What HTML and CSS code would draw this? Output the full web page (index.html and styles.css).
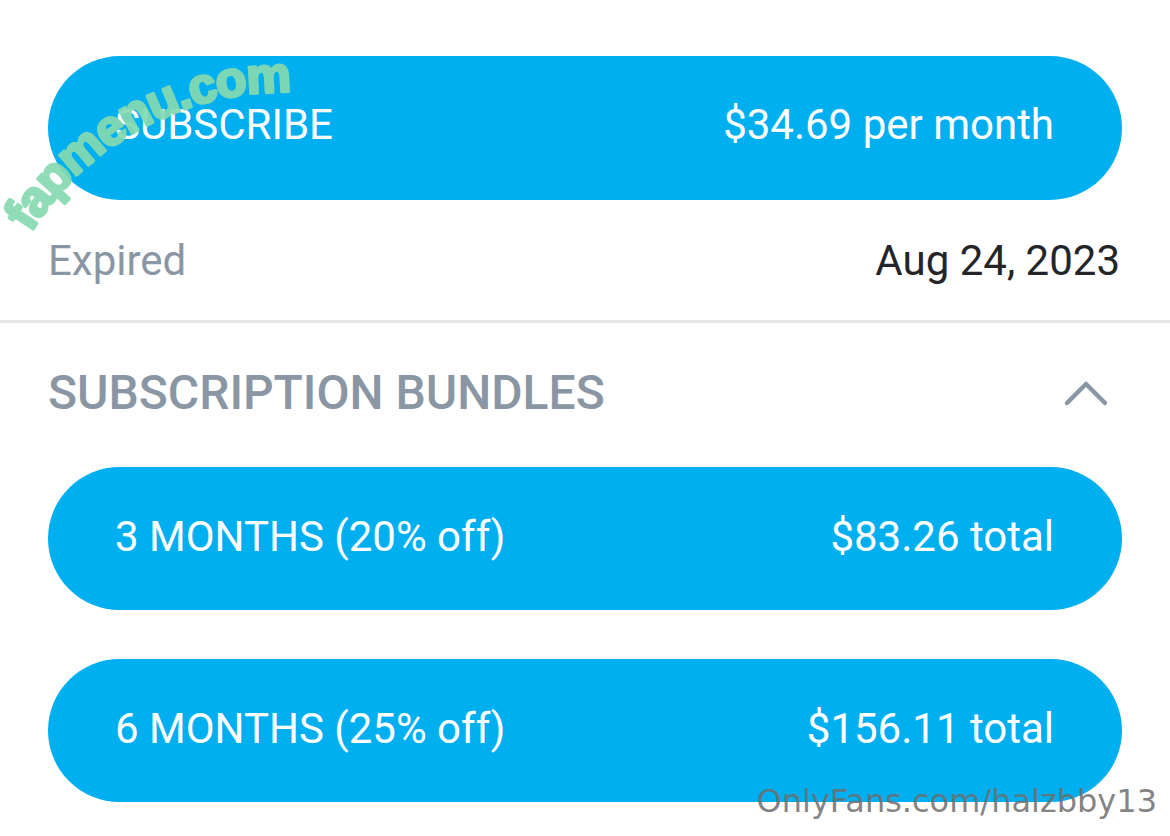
FILE: index.html
```html
<!DOCTYPE html>
<html lang="en">

<head>
  <meta charset="utf-8">
  <meta name="viewport" content="width=device-width, initial-scale=1">
  <title>Subscription</title>

  <link rel="stylesheet" href="styles.css">
</head>

<body>
  <div class="page">
    <section class="plan">
      <button class="btn" type="button">
        <span>SUBSCRIBE</span>
        <span>$34.69 per month</span>
      </button>
      <div class="status">
        <span class="status-label">Expired</span>
        <span class="status-date">Aug 24, 2023</span>
      </div>
    </section>

    <section class="bundles">
      <div class="bundles-head">
        <h2>SUBSCRIPTION BUNDLES</h2>
        <svg class="chevron" width="46" height="28" viewBox="0 0 46 28">
          <polyline points="4,24 23,5 42,24" fill="none" stroke="#8a96a3" stroke-width="4.5" stroke-linecap="round" stroke-linejoin="round" />
        </svg>
      </div>
      <div class="bundle-list">
        <button class="btn" type="button">
          <span>3 MONTHS (20% off)</span>
          <span>$83.26 total</span>
        </button>
        <button class="btn" type="button">
          <span>6 MONTHS (25% off)</span>
          <span>$156.11 total</span>
        </button>
      </div>
    </section>

    <!-- watermarks -->
    <svg class="mark-site" width="400" height="260" viewBox="0 0 400 260">
      <path id="mark-arc" d="M 30.6 233 A 300 300 0 0 1 387.6 110.1" fill="none" />
      <text><textPath href="#mark-arc">fapmenu.com</textPath></text>
    </svg>
    <span class="mark-user">OnlyFans.com/halzbby13</span>
  </div>
</body>

</html>
```

FILE: styles.css
```css
body {
  margin: 0;
  background: #fff;
  font-family: Roboto, "Noto Sans", sans-serif;
}

.page {
  position: relative;
  height: 836px;
  overflow: hidden;
}

.plan {
  padding: 56px 48px 0;
  border-bottom: 3px solid #e6e6e6;
}

.btn {
  display: flex;
  justify-content: space-between;
  align-items: center;
  width: 100%;
  height: 144px;
  box-sizing: border-box;
  padding: 0 68px 6px 67px;
  border: none;
  border-radius: 72px;
  background: #00aff0;
  color: #fff;
  font-family: Roboto, sans-serif;
  font-size: 42px;
  line-height: 1.2;
  cursor: pointer;
}

.status {
  display: flex;
  justify-content: space-between;
  align-items: center;
  height: 120px;
  font-size: 42px;
}

.status-label {
  color: #8a96a3;
}

.status-date {
  color: #242529;
  padding-right: 2px;
}

.bundles {
  padding: 0 48px;
}

.bundles-head {
  display: flex;
  justify-content: space-between;
  align-items: center;
  height: 140px;
}

.bundles-head h2 {
  margin: 0;
  padding-bottom: 2px;
  font-size: 48px;
  font-weight: 500;
  color: #8a96a3;
}

.chevron {
  margin-right: 13px;
}

.bundle-list {
  display: flex;
  flex-direction: column;
  gap: 49px;
  margin-top: 4px;
}

.bundle-list .btn {
  height: 143px;
  padding-bottom: 2px;
}

.mark-site {
  position: absolute;
  left: 0;
  top: 0;
  overflow: visible;
  pointer-events: none;
}

.mark-site text {
  font-family: "Liberation Sans", sans-serif;
  font-weight: bold;
  font-size: 50px;
  letter-spacing: -1.5px;
  fill: #86dab0;
  stroke: #86dab0;
  stroke-width: 3px;
  stroke-linejoin: round;
  opacity: 0.92;
}

.mark-user {
  position: absolute;
  right: 13px;
  top: 782px;
  font-family: "DejaVu Sans", sans-serif;
  font-size: 32px;
  color: rgba(110, 110, 110, 0.85);
}
```
